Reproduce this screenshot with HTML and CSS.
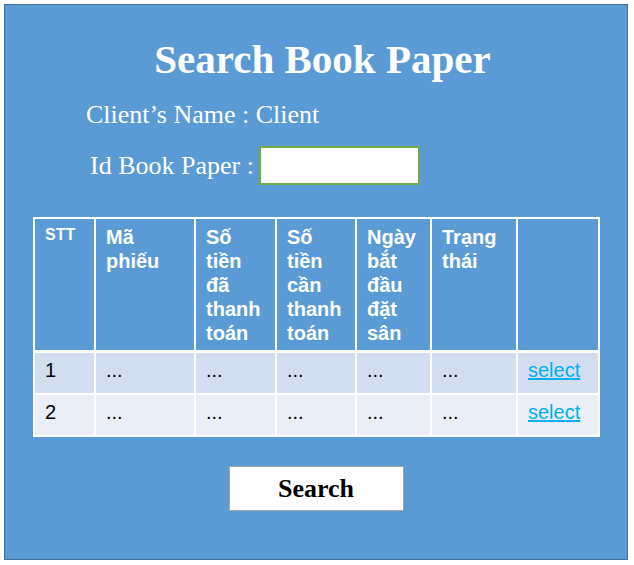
FILE: index.html
```html
<!DOCTYPE html>
<html lang="vi">
<head>
<meta charset="utf-8">
<title>Search Book Paper</title>
<link rel="stylesheet" href="styles.css">
</head>
<body>
<div class="frame">
  <h1 class="title">Search Book Paper</h1>
  <div class="client">Client’s Name : Client</div>
  <div class="id-row">
    <label class="id-label" for="idbp">Id Book Paper :</label>
    <input class="id-input" id="idbp" type="text">
  </div>
  <table class="grid">
    <colgroup>
      <col class="c1"><col class="c2"><col class="c3"><col class="c4"><col class="c5"><col class="c6"><col class="c7">
    </colgroup>
    <thead>
      <tr>
        <th class="stt">STT</th>
        <th>Mã<br>phiếu</th>
        <th>Số<br>tiền<br>đã<br>thanh<br>toán</th>
        <th>Số<br>tiền<br>cần<br>thanh<br>toán</th>
        <th>Ngày<br>bắt<br>đầu<br>đặt<br>sân</th>
        <th>Trạng<br>thái</th>
        <th></th>
      </tr>
    </thead>
    <tbody>
      <tr class="odd">
        <td>1</td><td>...</td><td>...</td><td>...</td><td>...</td><td>...</td><td><a href="#" class="sel">select</a></td>
      </tr>
      <tr class="even">
        <td>2</td><td>...</td><td>...</td><td>...</td><td>...</td><td>...</td><td><a href="#" class="sel">select</a></td>
      </tr>
    </tbody>
  </table>
  <div class="btn-row">
    <button class="search-btn" type="button">Search</button>
  </div>
</div>
</body>
</html>
```

FILE: styles.css
```css
html, body {
  margin: 0;
  padding: 0;
  background: #ffffff;
}
body {
  width: 634px;
  height: 565px;
  overflow: hidden;
}
.frame {
  margin: 4px 0 0 4px;
  width: 622px;
  height: 554px;
  background: #5b9bd5;
  border: 1px solid #41719c;
  overflow: hidden;
  font-family: "Liberation Serif", "Times New Roman", serif;
  color: #ffffff;
}
.title {
  margin: 30px 0 0 0;
  padding-left: 13px;
  font-size: 41px;
  line-height: 48px;
  font-weight: bold;
  text-align: center;
}
.client {
  margin-top: 17px;
  padding-left: 81px;
  font-size: 26px;
  line-height: 30px;
}
.id-row {
  margin-top: 16px;
  padding-left: 85px;
  display: flex;
  align-items: center;
  gap: 5px;
}
.id-label {
  font-size: 26px;
  line-height: 30px;
}
.id-input {
  box-sizing: border-box;
  width: 161px;
  height: 39px;
  margin: 0;
  padding: 0 4px;
  border: 2px solid #70ad47;
  background: #ffffff;
  outline: none;
}
.grid {
  margin: 32px 0 0 28px;
  border-collapse: separate;
  border-spacing: 0;
  table-layout: fixed;
  width: 567px;
  border-top: 2px solid #ffffff;
  border-left: 2px solid #ffffff;
  font-family: "Liberation Sans", Arial, sans-serif;
}
.c1 { width: 61px; }
.c2 { width: 100px; }
.c3 { width: 81px; }
.c4 { width: 80px; }
.c5 { width: 75px; }
.c6 { width: 86px; }
.c7 { width: 82px; }
.grid th,
.grid td {
  border-right: 2px solid #ffffff;
  border-bottom: 2px solid #ffffff;
  text-align: left;
  vertical-align: top;
  padding: 6px 4px 0 10px;
}
.grid th {
  height: 125px;
  border-bottom-width: 3px;
  font-size: 20px;
  line-height: 24px;
  font-weight: bold;
  color: #ffffff;
  background: #5b9bd5;
}
.grid th.stt {
  font-size: 16px;
  line-height: 20px;
}
.grid td {
  height: 35px;
  padding-top: 5px;
  font-size: 20px;
  line-height: 24px;
  color: #000000;
}
.odd td { background: #d2deef; }
.even td { background: #eaeff7; }
.sel {
  color: #00b0f0;
  text-decoration: underline;
}
.btn-row {
  margin-top: 29px;
  display: flex;
  justify-content: center;
}
.search-btn {
  box-sizing: border-box;
  width: 175px;
  height: 45px;
  margin: 0;
  padding: 0;
  background: #ffffff;
  border: 1px solid #a6a6a6;
  font-family: "Liberation Serif", "Times New Roman", serif;
  font-size: 26px;
  font-weight: bold;
  color: #000000;
}
```
